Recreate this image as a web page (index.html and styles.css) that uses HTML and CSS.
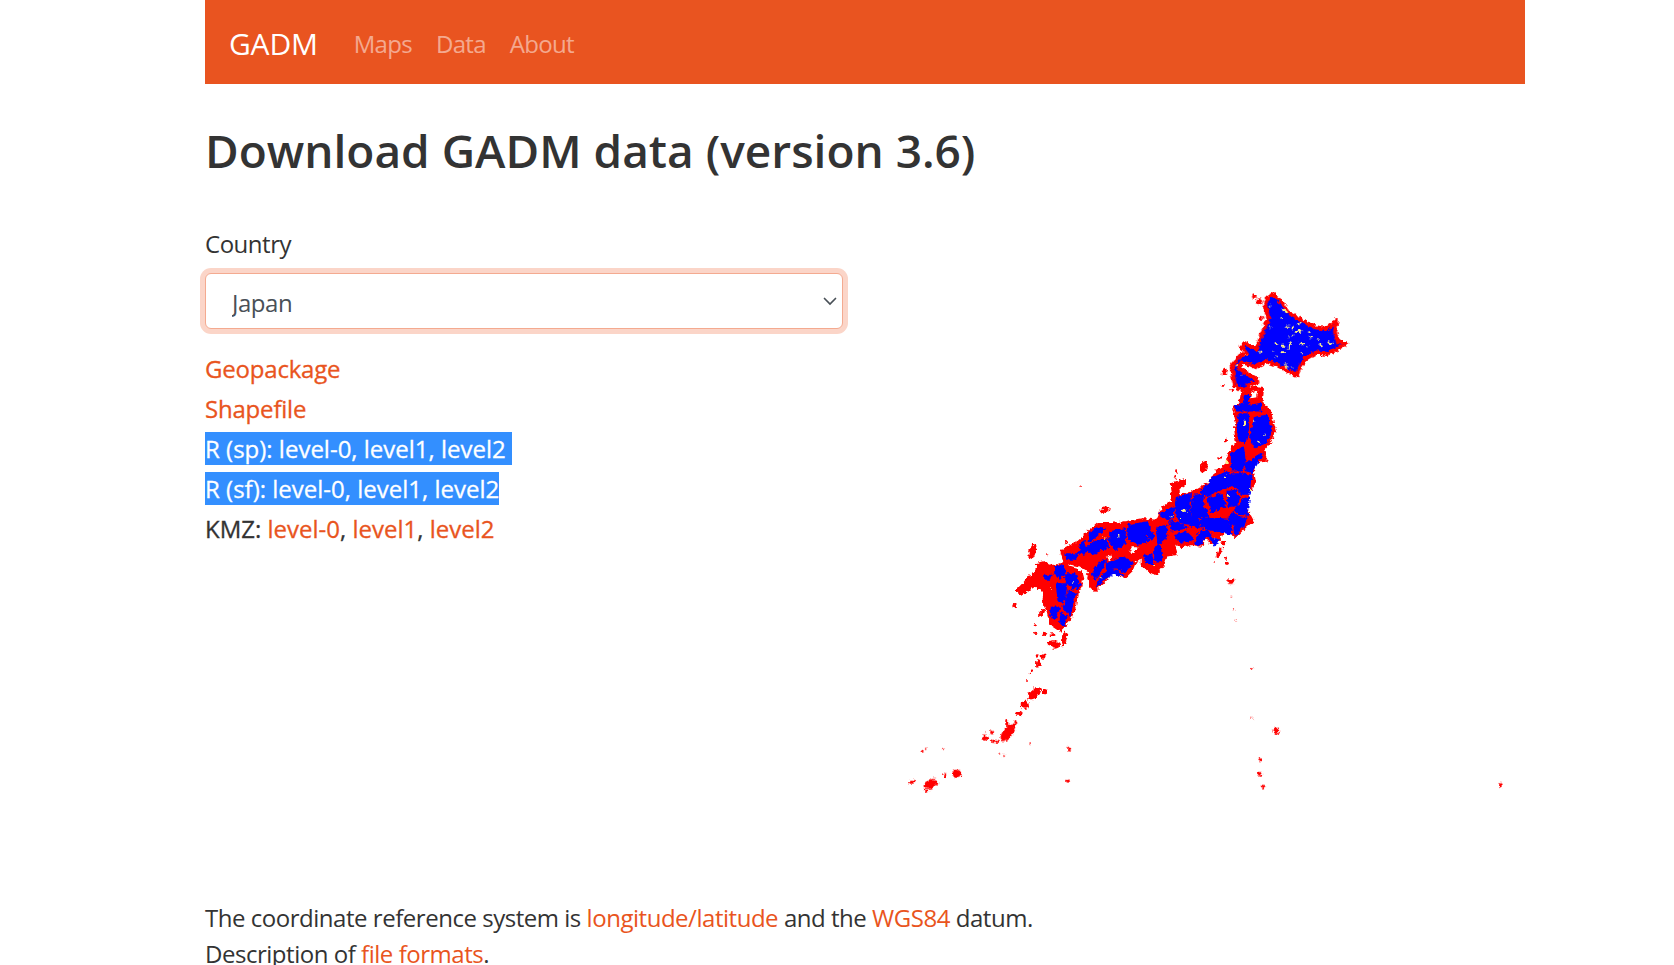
FILE: index.html
```html
<!DOCTYPE html>
<html lang="en">
<head>
    <meta charset="UTF-8">
    <title>GADM data</title>
    <link rel="stylesheet" href="styles.css">
</head>
<body>
    <div class="page">
        <nav class="navbar">
            <a class="brand" href="#">GADM</a>
            <a class="nav-link" href="#">Maps</a>
            <a class="nav-link" href="#">Data</a>
            <a class="nav-link" href="#">About</a>
        </nav>

        <h1>Download GADM data (version 3.6)</h1>

        <div class="row">
            <div class="left-col">
                <label class="field-label" for="country">Country</label>
                <div class="select-wrap">
                    <select id="country" class="country-select">
                        <option>Japan</option>
                    </select>
                    <svg class="chevron" viewBox="0 0 14 9"><path d="M1.500 1.500 7 7l5.500-5.500" fill="none" stroke="#495057" stroke-width="1.700" stroke-linecap="round"/></svg>
                </div>
                <ul class="downloads">
                    <li class="tight"><a href="#">Geopackage</a></li>
                    <li class="tight"><a href="#">Shapefile</a></li>
                    <li><span class="selected">R (sp): level-0, level1, level2&nbsp;</span></li>
                    <li><span class="selected">R (sf): level-0, level1, level2</span></li>
                    <li>KMZ: <a href="#">level-0</a>, <a href="#">level1</a>, <a href="#">level2</a></li>
                </ul>
            </div>

            <svg class="map" viewBox="865 227 660 660">
                <defs>
                    <!-- roughens the coast so it reads like the rasterised map -->
                    <filter id="rough" filterUnits="userSpaceOnUse" x="865" y="227" width="660" height="660">
                        <feTurbulence type="fractalNoise" baseFrequency=".3" numOctaves="2" seed="3" result="noise"/>
                        <feDisplacementMap in="SourceGraphic" in2="noise" scale="5" xChannelSelector="R" yChannelSelector="G"/>
                    </filter>
                </defs>
                <g filter="url(#rough)">
                <!-- land silhouettes, page coordinates -->
                <g fill="#f00" stroke="#f00" stroke-width="2" stroke-linejoin="round">
                    <path d="M1241.700 395 1248 390 1253 388 1263 390 1261.700 403 1270 413 1275 431.700 1270 443 1263 451.700 1266.700 461.700 1255 463 1253 473 1255 483 1248 495 1246.700 510 1250 516.700 1252.700 521.700 1243 530 1235 538 1230 533 1223 533 1220 540 1213 537 1211.700 545 1205 536.700 1201.700 546.700 1191.700 545 1180 548 1173 543 1176.700 555 1166.700 556.700 1163 566.700 1156.700 575 1150 573 1141.700 565 1141.700 555 1136.700 555 1130 546.700 1116.700 550 1106.700 555 1090 558 1080 560 1065 561.700 1061.700 555 1061.700 551.700 1078 543 1086.700 535 1098 525 1110 525 1126.700 523 1143 520 1156.700 521.700 1163 508 1173 501.700 1173 495 1171.700 485 1185 480 1185 485 1178 490 1180 496.700 1193 493 1198 490 1210 483 1216.700 471.700 1226.700 465 1228 455 1236.700 443 1235 430 1236.700 423 1233 408 1240 405Z"/>
                    <path d="M1038 566.700 1053 568 1063 565 1068 568 1080 568 1078 576.700 1081.700 586.700 1076.700 595 1075 608 1070 620 1060 631.700 1050 625 1048 613 1043 603 1045 593 1035 586.700 1021.700 595 1016.700 591.700 1025 583 1028 578 1033 576.700Z"/>
                    <path d="M1088 576.700 1101.700 560 1110 558 1123 555 1135 563 1131.700 571.700 1125 578 1111.700 573 1103 583 1095 591.700 1090 586.700Z"/>
                    <path d="M1061.700 551.700 1110 536.700 1136.700 546.700 1143.300 556.700 1133.300 563.300 1123.300 555 1103.300 560 1088.300 576.700 1078.300 567.300 1066.700 565 1063.300 560Z"/>
                    <path d="M1036.700 565 1043.300 563.300 1053.300 567.300 1066.700 563.300 1080 567.300 1083.300 580 1070 585 1040 580Z"/>
                </g>

                <!-- Hokkaido -->
                <g transform="translate(1220 285) scale(.3333)">
                    <path fill="#00f" stroke="#f00" stroke-width="12" stroke-linejoin="round" d="M140 45 160 30 185 55 205 85 245 110 285 130 320 135 350 108 345 145 355 175 378 178 350 195 320 210 290 205 255 225 240 250 230 272 205 262 175 245 140 232 105 250 85 240 65 235 55 250 75 265 110 285 112 295 90 300 70 320 45 305 40 280 35 245 60 215 80 210 65 190 75 178 110 195 125 150 145 105 135 60Z"/>
                    <path fill="none" stroke="#fe8" stroke-width="6" d="M190 75l12 12M150 65h3M185 105h4M195 128h16M218 128v8M235 118l6 4M225 145l20-6M268 142v5M268 160h8M295 165v5M210 175l-3 22M240 178l10 4M185 185h10M170 175v6M185 205h10M170 215v5M195 238l4 16M217 250h2M265 185v5M300 180l6 10M325 175l12 5M148 130h5M118 203h8M75 213h3M50 240v8M205 160h3M215 155h4M245 205v3M65 270v4M160 200v3"/>
                    <g fill="#f00">
                        <ellipse cx="103" cy="38" rx="7" ry="7"/>
                        <ellipse cx="118" cy="52" rx="9" ry="9"/>
                        <ellipse cx="122" cy="103" rx="8" ry="5"/>
                        <ellipse cx="15" cy="263" rx="7" ry="9"/>
                        <ellipse cx="10" cy="307" rx="5" ry="4"/>
                        <ellipse cx="35" cy="318" rx="4" ry="4"/>
                    </g>
                </g>

                <!-- Tohoku cells -->
                <g transform="translate(1000 280) scale(.3333)">
                    <g class="cells">
                        <path d="M735 350 745 350 745 380 780 375 785 395 750 395 710 395 705 385 730 375Z"/>
                        <path d="M715 405 745 405 745 450 735 490 715 480Z"/>
                        <path d="M765 415 800 410 815 455 800 490 765 505 750 470Z"/>
                    </g>
                    <path fill="#fff" d="M755 340 772 335 768 355 750 358Z"/>
                    <path fill="none" stroke="#fe8" stroke-width="6" d="M735 425v14M763 425v4M790 470h4M775 485v6"/>
                    <g fill="#f00">
                        <ellipse cx="672" cy="282" rx="7" ry="8"/>
                        <ellipse cx="668" cy="322" rx="5" ry="4"/>
                        <ellipse cx="695" cy="335" rx="3" ry="3"/>
                        <ellipse cx="680" cy="484" rx="4" ry="4"/>
                        <ellipse cx="243" cy="622" rx="2" ry="2"/>
                    </g>
                </g>

                <!-- central Honshu cells -->
                <g transform="translate(1130 430) scale(.3333)">
                    <g class="cells">
                        <path d="M305 75 340 55 345 100 335 125 305 125Z"/>
                        <path d="M345 105 395 75 380 105 365 130 350 125Z"/>
                        <path d="M245 150 288 128 300 135 335 135 365 140 360 195 335 195 318 170 280 178 235 200 215 190Z"/>
                        <path d="M192 200 225 195 215 215 235 260 205 265 210 295 180 290 185 245Z"/>
                        <path d="M235 210 275 195 285 230 245 250Z"/>
                        <path d="M292 188 315 185 328 205 322 228 295 232Z"/>
                        <path d="M340 210 358 205 352 240 355 258 325 255 312 240 330 230Z"/>
                        <path d="M250 268 295 272 308 250 320 262 350 268 340 290 315 320 312 285 290 285 250 280Z"/>
                        <path d="M215 270 240 265 300 290 305 315 255 305 215 295Z"/>
                        <path d="M215 305 235 308 245 330 225 318 212 345 195 345 205 318Z"/>
                        <path d="M140 205 180 195 178 285 150 280 135 240Z"/>
                        <path d="M90 255 130 235 130 265 110 272Z"/>
                        <path d="M120 275 170 295 125 305Z"/>
                        <path d="M15 285 50 280 65 310 35 320 0 325-5 290Z"/>
                        <path d="M80 300 105 295 110 320 85 345Z"/>
                        <path d="M135 320 170 310 190 330 150 340Z"/>
                    </g>
                    <path fill="none" stroke="#fe8" stroke-width="6" d="M290 95v10M295 198v6M155 245h15M122 262h6M150 270h5M360 175v12M285 140v4M270 165v3"/>
                    <g fill="#f00">
                        <ellipse cx="222" cy="112" rx="10" ry="20" transform="rotate(20 222 112)"/>
                        <ellipse cx="140" cy="127" rx="4" ry="4"/>
                        <ellipse cx="137" cy="145" rx="4" ry="4"/>
                        <ellipse cx="289" cy="33" rx="4" ry="4"/>
                        <ellipse cx="270" cy="87" rx="5" ry="5"/>
                    </g>
                </g>

                <!-- western Japan cells -->
                <g transform="translate(1010 480) scale(.3333)">
                    <path fill="#fff" d="M170 255 205 262 235 280 225 290 205 270 185 265ZM365 205 385 205 370 222 358 218ZM290 230 305 230 298 245Z"/>
                    <g class="cells">
                        <path d="M240 160 265 145 285 150 260 170 235 190Z"/>
                        <path d="M300 160 345 150 345 190 320 210 300 190Z"/>
                        <path d="M250 190 290 180 295 205 245 225 230 210Z"/>
                        <path d="M165 225 205 225 195 240 170 240Z"/>
                        <path d="M210 195 225 185 215 215Z"/>
                        <path d="M215 200 235 205 225 225 205 225Z"/>
                        <path d="M355 140 385 140 415 185 385 195 355 180Z"/>
                        <path d="M400 145 430 165 425 185Z"/>
                        <path d="M445 145 470 140 465 180 445 185Z"/>
                        <path d="M605 180 625 180 615 200Z"/>
                        <path d="M405 230 425 225 430 255 410 250Z"/>
                        <path d="M435 205 450 200 455 245 435 245Z"/>
                        <path d="M135 265 160 260 165 280 150 300 135 285Z"/>
                        <path d="M105 290 125 290 120 300 105 300Z"/>
                        <path d="M165 285 195 285 210 320 190 330 165 305Z"/>
                        <path d="M140 315 170 315 165 350 155 370 145 365Z"/>
                        <path d="M175 335 195 345 185 385 180 410 160 385Z"/>
                        <path d="M125 385 150 385 135 420 120 410Z"/>
                        <path d="M155 400 170 415 160 440 150 430Z"/>
                        <path d="M248 285 270 250 285 245 278 265 265 290 255 300Z"/>
                        <path d="M290 255 335 235 368 250 345 280 320 265 290 270Z"/>
                        <path d="M265 305 300 270 320 275 340 290 310 285 280 300 262 322Z"/>
                    </g>
                    <path fill="none" stroke="#fe8" stroke-width="6" d="M280 178h6M325 165v8M190 310v5M275 295v3M430 258h5M120 328h2"/>
                    <g fill="#f00">
                        <ellipse cx="285" cy="93" rx="15" ry="10" transform="rotate(-30 285 93)"/>
                        <ellipse cx="213" cy="21" rx="2" ry="2"/>
                        <ellipse cx="170" cy="190" rx="4" ry="4"/>
                        <ellipse cx="113" cy="228" rx="2" ry="2"/>
                    </g>
                </g>

                <!-- outlying islands -->
                <g transform="translate(900 540) scale(.3953 .3333)" fill="#f00">
                    <ellipse cx="335" cy="37" rx="8" ry="25" transform="rotate(15 335 37)"/>
                    <ellipse cx="375" cy="50" rx="2" ry="2"/>
                    <ellipse cx="290" cy="201" rx="6" ry="7"/>
                    <ellipse cx="358" cy="222" rx="6" ry="13" transform="rotate(30 358 222)"/>
                    <ellipse cx="342" cy="260" rx="4" ry="5"/>
                    <ellipse cx="342" cy="283" rx="5" ry="5"/>
                    <ellipse cx="364" cy="286" rx="6" ry="5"/>
                    <ellipse cx="386" cy="287" rx="8" ry="4"/>
                    <ellipse cx="415" cy="300" rx="7" ry="22" transform="rotate(10 415 300)"/>
                    <ellipse cx="392" cy="318" rx="13" ry="11"/>
                    <ellipse cx="380" cy="312" rx="7" ry="7"/>
                    <ellipse cx="362" cy="350" rx="6" ry="9"/>
                    <ellipse cx="347" cy="351" rx="6" ry="5"/>
                    <ellipse cx="350" cy="375" rx="6" ry="11"/>
                    <ellipse cx="333" cy="397" rx="2.500" ry="2.500"/>
                    <ellipse cx="330" cy="404" rx="2" ry="2"/>
                    <ellipse cx="321" cy="426" rx="2" ry="3"/>
                    <ellipse cx="340" cy="463" rx="12" ry="22" transform="rotate(40 340 463)"/>
                    <ellipse cx="366" cy="458" rx="7" ry="8"/>
                    <ellipse cx="317" cy="497" rx="9" ry="12"/>
                    <ellipse cx="300" cy="524" rx="9" ry="6"/>
                    <ellipse cx="273" cy="580" rx="13" ry="30" transform="rotate(30 273 580)"/>
                    <ellipse cx="270" cy="552" rx="4" ry="10"/>
                    <ellipse cx="291" cy="549" rx="4" ry="7"/>
                    <ellipse cx="233" cy="580" rx="5" ry="6"/>
                    <ellipse cx="215" cy="580" rx="2.500" ry="2.500"/>
                    <ellipse cx="215" cy="597" rx="9" ry="8"/>
                    <ellipse cx="240" cy="607" rx="10" ry="5"/>
                    <ellipse cx="327" cy="615" rx="2.500" ry="2.500"/>
                    <ellipse cx="251" cy="644" rx="3" ry="2.500"/>
                    <ellipse cx="263" cy="651" rx="2.500" ry="2.500"/>
                    <ellipse cx="428" cy="630" rx="5" ry="8"/>
                    <ellipse cx="425" cy="726" rx="5" ry="5"/>
                    <ellipse cx="890" cy="388" rx="2.500" ry="2.500"/>
                    <ellipse cx="890" cy="536" rx="2.500" ry="2.500"/>
                    <ellipse cx="952" cy="576" rx="7" ry="10"/>
                    <ellipse cx="909" cy="662" rx="5" ry="5"/>
                    <ellipse cx="911" cy="705" rx="6" ry="6"/>
                    <ellipse cx="917" cy="743" rx="5" ry="6"/>
                    <ellipse cx="1520" cy="740" rx="5" ry="8"/>
                    <ellipse cx="837" cy="127" rx="9" ry="8"/>
                    <ellipse cx="838" cy="173" rx="2.500" ry="2.500"/>
                    <ellipse cx="844" cy="212" rx="2.500" ry="2.500"/>
                    <ellipse cx="850" cy="245" rx="2" ry="2"/>
                    <ellipse cx="65" cy="628" rx="2" ry="2"/>
                    <ellipse cx="57" cy="638" rx="3" ry="3"/>
                    <ellipse cx="108" cy="628" rx="2" ry="2"/>
                    <ellipse cx="30" cy="728" rx="7" ry="6"/>
                    <ellipse cx="113" cy="709" rx="4" ry="8"/>
                    <ellipse cx="143" cy="703" rx="11" ry="11"/>
                    <ellipse cx="78" cy="735" rx="20" ry="13" transform="rotate(-30 78 735)"/>
                    <ellipse cx="68" cy="756" rx="5" ry="5"/>
                    <ellipse cx="808" cy="40" rx="6" ry="15" transform="rotate(20 808 40)"/>
                    <ellipse cx="818" cy="12" rx="7" ry="7"/>
                    <ellipse cx="824" cy="58" rx="5" ry="4"/>
                    <ellipse cx="827" cy="73" rx="5" ry="5"/>
                    <ellipse cx="795" cy="69" rx="2" ry="2"/>
                </g>
                </g>
            </svg>
        </div>

        <p class="note">The coordinate reference system is <a href="#">longitude/latitude</a> and the <a href="#">WGS84</a> datum.</p>
        <p class="note">Description of <a href="#">file formats</a>.</p>
    </div>
</body>
</html>
```

FILE: styles.css
```css
html, body {
    margin: 0;
    background: #fff;
}
body {
    font-family: "Open Sans", "Noto Sans", sans-serif;
    font-size: 24px;
    line-height: 36px;
    letter-spacing: -.47px;
    color: #333;
}
a {
    color: #e95420;
    text-decoration: none;
}
.page {
    width: 1320px;
    margin-left: 205px;
}
.navbar {
    display: flex;
    align-items: center;
    box-sizing: border-box;
    height: 84px;
    padding: 3px 0 0 24px;
    background-color: #e95420;
}
.brand {
    font-size: 30px;
    letter-spacing: -.2px;
    color: #fff;
    margin-right: 36px;
}
.nav-link {
    color: rgba(255, 255, 255, .5);
    letter-spacing: -.7px;
    margin-right: 24px;
}
h1 {
    margin: 38px 0 0;
    height: 104px;
    font-size: 46px;
    line-height: 56px;
    font-weight: 600;
    letter-spacing: 0;
}
.row {
    display: flex;
    gap: 22px;
}
.left-col {
    width: 638px;
}
.field-label {
    display: block;
    margin-bottom: 11px;
}
.select-wrap {
    position: relative;
}
.country-select {
    display: block;
    width: 100%;
    height: 56px;
    padding: 4px 48px 0 26px;
    box-sizing: border-box;
    appearance: none;
    font: inherit;
    letter-spacing: -.47px;
    color: #495057;
    background: #fff;
    border: 1px solid #f4aa90;
    border-radius: 6px;
    box-shadow: 0 0 0 5px #fbd5c8;
    outline: none;
}
.chevron {
    position: absolute;
    right: 6px;
    top: 24px;
    width: 14px;
    height: 9px;
    pointer-events: none;
}
.downloads {
    list-style: none;
    margin: 22px 0 0;
    padding: 0;
    letter-spacing: 0;
    -webkit-text-stroke: .3px currentColor;
}
.downloads li {
    margin-bottom: 4px;
}
.downloads .tight {
    letter-spacing: -.2px;
}
.selected {
    color: #fff;
    background-color: #338fff;
}
.map {
    display: block;
    width: 660px;
    height: 660px;
}
.cells {
    fill: #00f;
    stroke: #00f;
    stroke-width: 5;
    stroke-linejoin: round;
}
.note {
    margin: 0;
}
.row + .note {
    margin-top: 14px;
}
```
